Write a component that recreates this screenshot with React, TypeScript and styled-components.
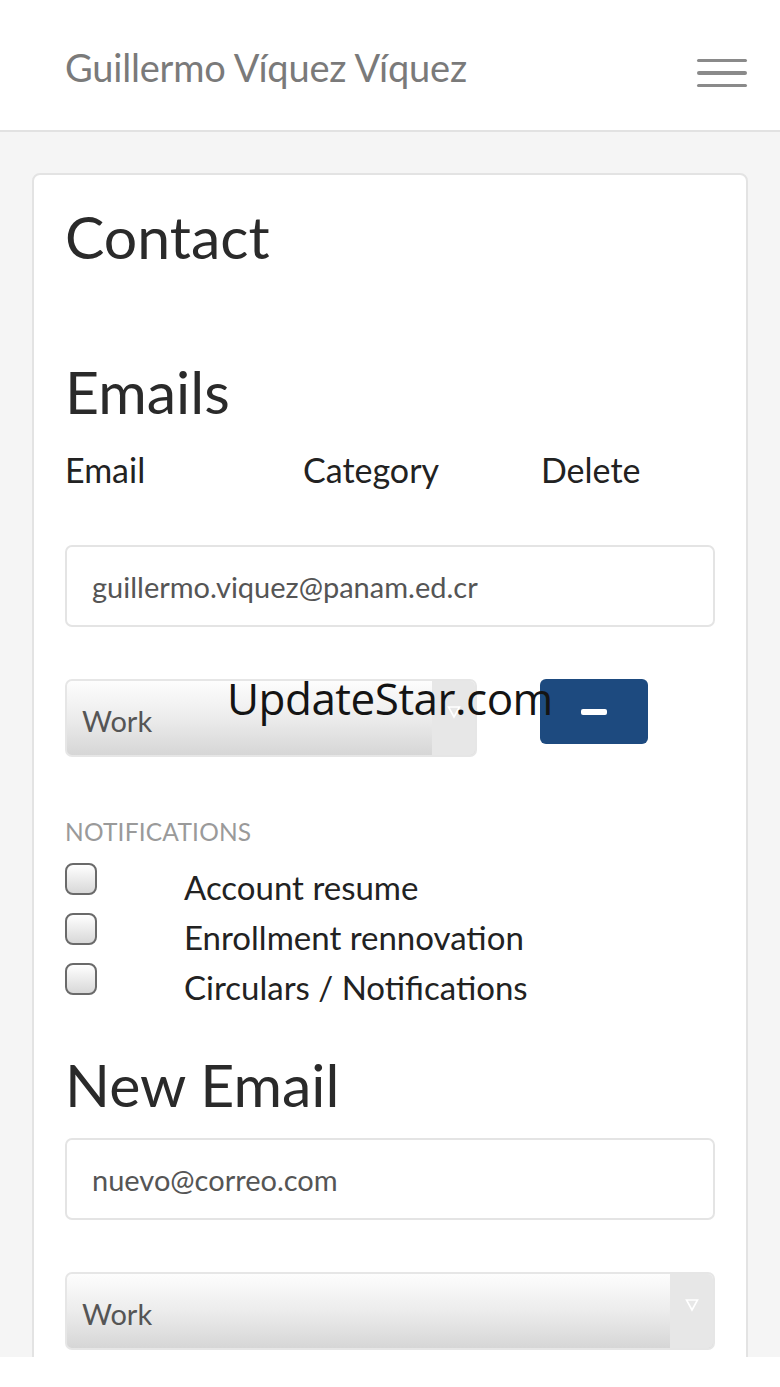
import React from "react";
import styled, { createGlobalStyle } from "styled-components";

const Global = createGlobalStyle`
  html, body { margin: 0; padding: 0; background: #ffffff; }
  * { box-sizing: border-box; }
  body { font-family: Lato, "Open Sans", Arial, sans-serif; }
`;

const Page = styled.div`
  position: relative;
  width: 780px;
  height: 1387px;
  overflow: hidden;
  display: grid;
  grid-template-rows: 132px 1225px 30px;
  background: #ffffff;
`;

const Header = styled.header`
  display: flex;
  align-items: center;
  justify-content: space-between;
  padding: 0 33px 0 65px;
  background: #ffffff;
  border-bottom: 2px solid #e2e2e2;
`;

const Title = styled.h1`
  margin: 4px 0 0 0;
  font-family: Lato, sans-serif;
  font-weight: 400;
  font-size: 38px;
  color: #7a7a7a;
  letter-spacing: -0.2px;
`;

const Burger = styled.button`
  display: flex;
  flex-direction: column;
  gap: 9px;
  width: 50px;
  padding: 0;
  border: none;
  background: none;
  margin-top: 16px;
  span {
    display: block;
    height: 3.5px;
    border-radius: 2px;
    background: #8a8a8a;
  }
`;

const Main = styled.main`
  background: #f5f5f5;
  padding: 41px 32px 0 32px;
  overflow: hidden;
`;

const Footer = styled.div`
  background: #ffffff;
`;

const Card = styled.section`
  background: #ffffff;
  border: 2px solid #e3e3e3;
  border-radius: 8px;
  padding: 0 31px 60px 31px;
  min-height: 1300px;
`;

const Heading = styled.h2<{ $top: number }>`
  margin: ${(p) => p.$top}px 0 0 0;
  font-family: Lato, sans-serif;
  font-weight: 400;
  font-size: 59px;
  line-height: 66px;
  color: #2a2a2a;
`;

const ColumnHeads = styled.div`
  display: grid;
  grid-template-columns: 238px 238px auto;
  margin-top: 25px;
  font-size: 34px;
  line-height: 40px;
  color: #222;
`;

const TextField = styled.div<{ $top: number }>`
  margin-top: ${(p) => p.$top}px;
  height: 82px;
  border: 2px solid #e4e4e4;
  border-radius: 7px;
  display: flex;
  align-items: center;
  padding-left: 25px;
  font-size: 29px;
  color: #555;
`;

const SelectRow = styled.div<{ $top: number }>`
  margin-top: ${(p) => p.$top}px;
  display: flex;
  align-items: flex-start;
  gap: 63px;
`;

const Select = styled.div<{ $width?: number }>`
  width: ${(p) => (p.$width ? `${p.$width}px` : "100%")};
  height: 78px;
  border: 2px solid #e6e6e6;
  border-radius: 7px;
  overflow: hidden;
  display: flex;
  background: linear-gradient(#fdfdfd 0%, #ececec 50%, #d6d6d6 100%);
`;

const SelectValue = styled.div`
  flex: 1;
  display: flex;
  align-items: center;
  padding: 4px 0 0 15px;
  font-size: 29px;
  color: #555;
`;

const Arrow = styled.div`
  width: 43px;
  background: #e7e7e7;
  display: flex;
  justify-content: center;
  padding-top: 24px;
`;

const RemoveButton = styled.button`
  width: 108px;
  height: 65px;
  border: none;
  border-radius: 6px;
  background: #1d4a7f;
  display: flex;
  align-items: center;
  justify-content: center;
  span {
    width: 26px;
    height: 6px;
    border-radius: 2px;
    background: #ffffff;
  }
`;

const Label = styled.div`
  margin-top: 61px;
  font-size: 24.5px;
  line-height: 28px;
  color: #9a9a9a;
  letter-spacing: 0.2px;
`;

const CheckList = styled.div`
  margin-top: 17px;
  display: flex;
  flex-direction: column;
  gap: 18px;
`;

const CheckRow = styled.label`
  display: flex;
  align-items: center;
  height: 32px;
  font-size: 33px;
  color: #222;
`;

const Box = styled.span`
  width: 32px;
  height: 32px;
  border: 2px solid #6a6a6a;
  border-radius: 8px;
  background: linear-gradient(#ffffff, #d8d8d8);
  margin-right: 87px;
  flex: none;
`;

const CheckText = styled.span`
  margin-top: 15px;
`;

const Watermark = styled.div`
  position: absolute;
  left: 227px;
  top: 668px;
  font-family: "Open Sans", "Noto Sans", sans-serif;
  font-size: 44px;
  line-height: 60px;
  color: #141414;
  letter-spacing: -0.5px;
  pointer-events: none;
`;

const ArrowIcon = () => (
  <svg width="14" height="14" viewBox="0 0 14 14">
    <path d="M1.5 2 L12.5 2 L7 12 Z" fill="none" stroke="#ffffff" strokeWidth="1.6" />
  </svg>
);

export default function App() {
  return (
    <>
      <Global />
      <Page>
        <Header>
          <Title>Guillermo Víquez Víquez</Title>
          <Burger aria-label="menu">
            <span />
            <span />
            <span />
          </Burger>
        </Header>
        <Main>
          <Card>
            <Heading $top={29}>Contact</Heading>
            <Heading $top={89}>Emails</Heading>
            <ColumnHeads>
              <span>Email</span>
              <span>Category</span>
              <span>Delete</span>
            </ColumnHeads>
            <TextField $top={55}>guillermo.viquez@panam.ed.cr</TextField>
            <SelectRow $top={52}>
              <Select $width={412}>
                <SelectValue>Work</SelectValue>
                <Arrow>
                  <ArrowIcon />
                </Arrow>
              </Select>
              <RemoveButton aria-label="delete">
                <span />
              </RemoveButton>
            </SelectRow>
            <Label>NOTIFICATIONS</Label>
            <CheckList>
              <CheckRow>
                <Box />
                <CheckText>Account resume</CheckText>
              </CheckRow>
              <CheckRow>
                <Box />
                <CheckText>Enrollment rennovation</CheckText>
              </CheckRow>
              <CheckRow>
                <Box />
                <CheckText>Circulars / Notifications</CheckText>
              </CheckRow>
            </CheckList>
            <Heading $top={57}>New Email</Heading>
            <TextField $top={20}>nuevo@correo.com</TextField>
            <SelectRow $top={52}>
              <Select>
                <SelectValue>Work</SelectValue>
                <Arrow>
                  <ArrowIcon />
                </Arrow>
              </Select>
            </SelectRow>
          </Card>
        </Main>
        <Footer />
        <Watermark>UpdateStar.com</Watermark>
      </Page>
    </>
  );
}
